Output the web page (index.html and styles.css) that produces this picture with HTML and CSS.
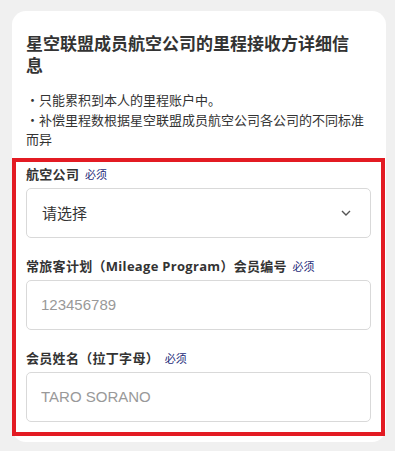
FILE: index.html
```html
<!DOCTYPE html>
<html lang="zh-CN">
<head>
    <meta charset="UTF-8">
    <meta name="viewport" content="width=device-width, initial-scale=1.0">
    <title>里程接收方详细信息</title>
    <link rel="stylesheet" href="styles.css">
</head>
<body>
    <div class="card">
        <h2 class="card-title">星空联盟成员航空公司的里程接收方详细信息</h2>
        <ul class="notes">
            <li>・只能累积到本人的里程账户中。</li>
            <li>・补偿里程数根据星空联盟成员航空公司各公司的不同标准而异</li>
        </ul>

        <div class="form-section">
            <div class="field">
                <label class="field-label">航空公司 <span class="required">必须</span></label>
                <div class="select-box">
                    <span class="select-text">请选择</span>
                    <svg class="chevron" width="10" height="6" viewBox="0 0 10 6">
                        <path d="M1 1 L5 5 L9 1" fill="none" stroke="#555" stroke-width="1.4"/>
                    </svg>
                </div>
            </div>
            <div class="field">
                <label class="field-label">常旅客计划（Mileage Program）会员编号 <span class="required">必须</span></label>
                <input class="text-input" type="text" placeholder="123456789">
            </div>
            <div class="field">
                <label class="field-label">会员姓名（拉丁字母） <span class="required">必须</span></label>
                <input class="text-input" type="text" placeholder="TARO SORANO">
            </div>
        </div>
    </div>
</body>
</html>
```

FILE: styles.css
```css
body {
    margin: 0;
    background-color: #f0f0f0;
    font-family: "Noto Sans CJK SC", "Liberation Sans", sans-serif;
    color: #333;
}

.card {
    margin: 11px 9px 0 12px;
    background-color: #fff;
    border-radius: 14px;
    padding: 21px 14px 6px 14px;
}

.card-title {
    margin: 0;
    font-size: 17px;
    line-height: 22px;
    font-weight: bold;
    color: #333;
    padding-right: 8px;
}

.notes {
    list-style: none;
    margin: 14px 0 9px 0;
    padding: 0;
    font-size: 13px;
    line-height: 19.5px;
    color: #333;
}

.form-section {
    margin: 0 -13px 0 -14px;
    border: 4px solid #e31b23;
    padding: 2px 10px 10px 10px;
}

.field + .field {
    margin-top: 18px;
}

.field-label {
    display: block;
    font-family: "Open Sans", "Noto Sans CJK SC", sans-serif;
    font-size: 13px;
    line-height: 20px;
    font-weight: bold;
    color: #333;
    margin-bottom: 4px;
    letter-spacing: 0.3px;
}

.required {
    font-family: "Noto Sans CJK SC", sans-serif;
    font-size: 11px;
    font-weight: normal;
    color: #1f2d7a;
    margin-left: 2px;
    letter-spacing: 0;
}

.select-box,
.text-input {
    box-sizing: border-box;
    width: 100%;
    height: 50px;
    border: 1px solid #d9d9d9;
    border-radius: 5px;
    background: #fff;
}

.select-box {
    display: flex;
    align-items: center;
    justify-content: space-between;
    padding: 0 19px 0 15px;
}

.select-text {
    font-size: 15px;
    color: #333;
}

.text-input {
    display: block;
    padding: 0 14px;
    font-family: "Liberation Sans", Arial, sans-serif;
    font-size: 15px;
    color: #333;
    outline: none;
}

.text-input::placeholder {
    color: #999;
}
```
